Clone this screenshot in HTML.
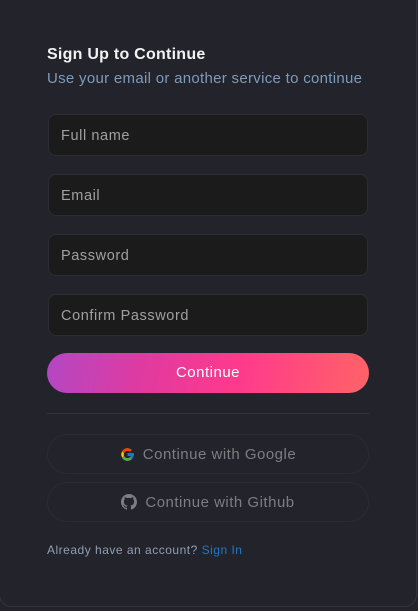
<!DOCTYPE html>
<html><head><style>
html,body{margin:0;padding:0;background:#22232b;width:418px;height:611px;overflow:hidden;font-family:"Liberation Sans",sans-serif}
.card{position:absolute;left:-1px;top:-10px;width:418px;height:617px;border:1px solid #33343c;border-radius:12px;background:#22232b;box-sizing:border-box}
.abs{position:absolute}
h1{position:absolute;left:47px;top:46px;margin:0;font-size:16px;font-weight:bold;color:#f2f2f2;letter-spacing:0.25px}
.sub{left:47px;top:70px;font-size:15px;color:#7f9bbb;letter-spacing:0.3px}
.in{position:absolute;left:48px;width:320px;height:42px;box-sizing:border-box;background:#1b1b1b;border:1px solid #2c2d33;border-radius:8px;color:#a0a0a0;font-size:14.5px;line-height:42px;padding-left:12px;letter-spacing:0.6px}
.btn{position:absolute;left:47px;top:353px;width:322px;height:40px;border-radius:20px;background:linear-gradient(100deg,#b248c4 0%,#e03aa0 30%,#ff3a8c 60%,#ff6366 100%);color:#fff;text-align:center;line-height:40px;font-size:15px;letter-spacing:0.5px}
.hr{position:absolute;left:47px;top:413px;width:322px;height:1px;background:#33343b}
.ob{position:absolute;left:47px;width:322px;height:40px;box-sizing:border-box;border:1px solid #2b2c33;border-radius:20px;color:#7d7d82;font-size:15px;display:flex;align-items:center;justify-content:center;gap:8px;letter-spacing:0.5px}
.foot{left:47px;top:543px;font-size:12px;color:#8f9fb4;letter-spacing:0.5px}
.foot span{color:#1f78c8}
</style></head><body>
<div class="card"></div>
<h1>Sign Up to Continue</h1>
<div class="abs sub">Use your email or another service to continue</div>
<div class="in" style="top:114px">Full name</div>
<div class="in" style="top:174px">Email</div>
<div class="in" style="top:234px">Password</div>
<div class="in" style="top:294px">Confirm Password</div>
<div class="btn">Continue</div>
<div class="hr"></div>
<div class="ob" style="top:434px"><svg width="15" height="15" viewBox="0 0 48 48"><path fill="#FFC107" d="M43.6 20.1H42V20H24v8h11.3C33.7 32.7 29.2 36 24 36c-6.6 0-12-5.4-12-12s5.4-12 12-12c3.1 0 5.8 1.2 7.9 3.1l5.7-5.7C34 6.1 29.3 4 24 4 13 4 4 13 4 24s9 20 20 20 20-9 20-20c0-1.300-.1-2.600-.4-3.900z"/><path fill="#FF3D00" d="M6.3 14.7l6.6 4.8C14.7 15.1 19 12 24 12c3.1 0 5.8 1.2 7.9 3.1l5.7-5.7C34 6.1 29.3 4 24 4 16.3 4 9.7 8.3 6.3 14.7z"/><path fill="#4CAF50" d="M24 44c5.2 0 9.9-2 13.4-5.2l-6.2-5.2C29.2 35.1 26.7 36 24 36c-5.2 0-9.6-3.3-11.3-8l-6.5 5C9.5 39.6 16.2 44 24 44z"/><path fill="#1976D2" d="M43.6 20.1H42V20H24v8h11.3c-.8 2.2-2.2 4.2-4.1 5.6l6.2 5.2C37 39.2 44 34 44 24c0-1.3-.1-2.6-.4-3.9z"/></svg>Continue with Google</div>
<div class="ob" style="top:482px"><svg width="16" height="16" viewBox="0 0 16 16"><path fill="#7d7d82" d="M8 0C3.58 0 0 3.58 0 8c0 3.540 2.290 6.530 5.470 7.590.4.07.55-.17.55-.38 0-.19-.01-.82-.01-1.49-2.01.37-2.53-.49-2.69-.94-.09-.23-.48-.94-.82-1.13-.28-.15-.68-.52-.01-.53.63-.01 1.08.58 1.23.82.72 1.21 1.87.87 2.33.66.07-.52.28-.87.51-1.07-1.78-.2-3.64-.89-3.64-3.95 0-.87.31-1.59.82-2.15-.08-.2-.36-1.02.08-2.12 0 0 .67-.21 2.2.82.64-.18 1.32-.27 2-.27s1.36.09 2 .27c1.53-1.04 2.2-.82 2.2-.82.44 1.1.16 1.92.08 2.12.51.56.82 1.27.82 2.15 0 3.07-1.87 3.75-3.65 3.950.29.25.54.73.54 1.480 0 1.070-.01 1.930-.01 2.200 0 .21.15.46.55.38A8.01 8.01 0 0016 8c0-4.42-3.58-8-8-8z"/></svg>Continue with Github</div>
<div class="abs foot">Already have an account? <span>Sign In</span></div>
</body></html>
